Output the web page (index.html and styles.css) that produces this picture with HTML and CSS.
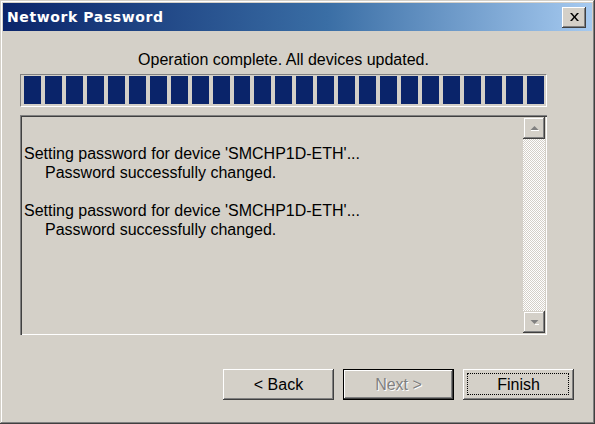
FILE: index.html
```html
<!DOCTYPE html>
<html>
<head>
<meta charset="utf-8">
<link rel="stylesheet" href="styles.css">
</head>
<body>
<div class="window">
  <div class="titlebar">
    <span class="title">Network Password</span>
    <div class="close">
      <svg width="9" height="8" viewBox="0 0 9 8"><path d="M0 0h2l2.5 3 2.5-3h2l-3.5 4 3.5 4h-2l-2.5-3-2.5 3h-2l3.5-4z" fill="#000"/></svg>
    </div>
  </div>
  <div class="content">
    <div class="status">Operation complete. All devices updated.</div>
    <div class="progress">
      <span></span><span></span><span></span><span></span><span></span>
      <span></span><span></span><span></span><span></span><span></span>
      <span></span><span></span><span></span><span></span><span></span>
      <span></span><span></span><span></span><span></span><span></span>
      <span></span><span></span><span></span><span></span><span></span>
    </div>
    <div class="logbox">
      <div class="log">
        <div class="line">Setting password for device 'SMCHP1D-ETH'...</div>
        <div class="line indent">Password successfully changed.</div>
        <div class="line">&nbsp;</div>
        <div class="line">Setting password for device 'SMCHP1D-ETH'...</div>
        <div class="line indent">Password successfully changed.</div>
      </div>
      <div class="scrollbar">
        <div class="sbtn"><svg width="9" height="6" viewBox="0 0 9 6"><path d="M0.5 5h8L4.5 1z" fill="#808080"/><path d="M1 5.5h8" stroke="#fff" stroke-width="1"/></svg></div>
        <div class="track"></div>
        <div class="sbtn"><svg width="9" height="6" viewBox="0 0 9 6"><path d="M0.5 1h8L4.5 5z" fill="#808080"/><path d="M5 5.5h4" stroke="#fff" stroke-width="1"/></svg></div>
      </div>
    </div>
  </div>
  <div class="buttons">
    <div class="btn"><span class="lbl">&lt; Back</span></div>
    <div class="btn default disabled"><span class="lbl">Next &gt;</span></div>
    <div class="btn focus"><span class="lbl">Finish</span></div>
  </div>
</div>
</body>
</html>
```
FILE: styles.css
```css
html, body {
  margin: 0;
  padding: 0;
  background: #d4d0c8;
}
.window {
  box-sizing: border-box;
  width: 595px;
  height: 424px;
  background: #d4d0c8;
  padding: 3px;
  display: flex;
  flex-direction: column;
  font-family: "Liberation Sans", Arial, sans-serif;
  font-size: 16px;
  color: #000;
  box-shadow: inset -1px -1px #404040, inset 1px 1px #d4d0c8, inset -2px -2px #808080, inset 2px 2px #fff;
}
.titlebar {
  height: 28px;
  display: flex;
  align-items: center;
  justify-content: space-between;
  padding: 0 6px 0 4px;
  background: linear-gradient(to right, #0a246a 0%, #3a6ea5 55%, #a6caf0 100%);
}
.title {
  color: #fff;
  font-family: "DejaVu Sans", sans-serif;
  font-weight: bold;
  font-size: 14px;
  letter-spacing: 0.6px;
}
.close {
  box-sizing: border-box;
  width: 24px;
  height: 21px;
  background: #d4d0c8;
  display: flex;
  align-items: center;
  justify-content: center;
  box-shadow: inset -1px -1px #404040, inset 1px 1px #fff, inset -2px -2px #808080;
}
.content {
  margin: 0 45px 0 17px;
  display: flex;
  flex-direction: column;
}
.status {
  text-align: center;
  height: 20px;
  line-height: 20px;
  margin-top: 19px;
  margin-bottom: 4px;
}
.progress {
  box-sizing: border-box;
  height: 33px;
  border-top: 1px solid #808080;
  border-left: 1px solid #808080;
  border-bottom: 1px solid #fff;
  border-right: 1px solid #fff;
  padding: 1px 2px 2px 3px;
  display: flex;
  gap: 4px;
}
.progress span {
  width: 17px;
  height: 28px;
  background: #0a246a;
}
.logbox {
  box-sizing: border-box;
  margin-top: 8px;
  height: 220px;
  display: flex;
  box-shadow: inset 1px 1px #808080, inset 2px 2px #404040, inset -1px -1px #fff, inset -2px -2px #d4d0c8;
  padding: 2px;
}
.log {
  flex: 1;
  padding: 27px 0 0 2px;
}
.line {
  height: 19px;
  line-height: 19px;
  white-space: pre;
}
.indent {
  padding-left: 21px;
}
.scrollbar {
  width: 22px;
  display: flex;
  flex-direction: column;
}
.sbtn {
  box-sizing: border-box;
  height: 22px;
  background: #d4d0c8;
  display: flex;
  align-items: center;
  justify-content: center;
  box-shadow: inset -1px -1px #404040, inset 1px 1px #d4d0c8, inset -2px -2px #808080, inset 2px 2px #fff;
}
.track {
  flex: 1;
  background: repeating-conic-gradient(#fff 0 25%, #d4d0c8 0 50%) 0 0 / 2px 2px;
}
.buttons {
  display: flex;
  justify-content: flex-end;
  gap: 9px;
  margin-top: 34px;
  padding-right: 18px;
}
.btn {
  box-sizing: border-box;
  width: 111px;
  height: 31px;
  display: flex;
  align-items: center;
  justify-content: center;
  box-shadow: inset -1px -1px #404040, inset 1px 1px #fff, inset -2px -2px #808080;
  position: relative;
}
.btn.default {
  box-shadow: inset 0 0 0 1px #000, inset -2px -2px #404040, inset 2px 2px #fff, inset -3px -3px #808080;
}
.btn.disabled .lbl {
  color: #808080;
  text-shadow: 1px 1px #fff;
}
.btn.focus::after {
  content: "";
  position: absolute;
  left: 4px;
  top: 4px;
  right: 5px;
  bottom: 5px;
  border: 1px dotted #000;
}
```
